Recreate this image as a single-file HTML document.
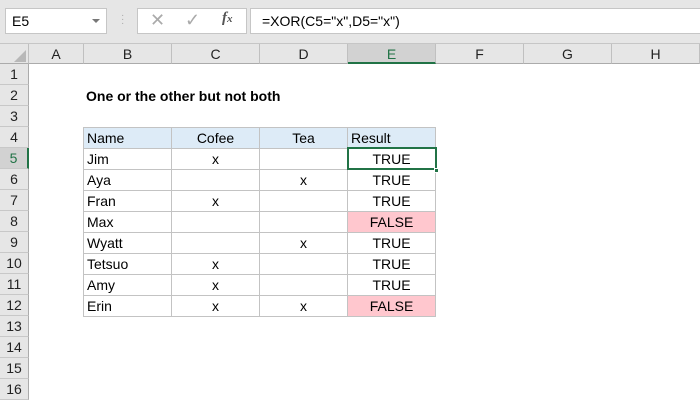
<!DOCTYPE html>
<html><head><style>
*{margin:0;padding:0;box-sizing:border-box}
body{width:700px;height:400px;overflow:hidden;background:#fff;font-family:"Liberation Sans",sans-serif;position:relative;font-size:14px;color:#000}
.a{position:absolute}
.top{left:0;top:0;width:700px;height:44px;background:#e6e6e6;border-bottom:1px solid #c6c6c6}
.box{background:#fff;border:1px solid #c6c6c6}
.ch{top:44px;height:20px;background:#e6e6e6;border-right:1px solid #c0c0c0;border-bottom:1px solid #ababab;text-align:center;line-height:20px;font-size:14px;color:#222}
.rh{left:0;width:29px;height:21px;background:#e6e6e6;border-bottom:1px solid #c8c8c8;border-right:1px solid #ababab;text-align:center;line-height:21px;font-size:14px;color:#222}
.c{height:21px;border-right:1px solid #c3c3c3;border-bottom:1px solid #c3c3c3;line-height:21px;font-size:14px;white-space:nowrap}
.ctr{text-align:center}
.l{padding-left:3px}
.hd{background:#ddebf7}
.f{background:#ffc7ce}
</style></head><body>
<div class="a top"></div>
<div class="a box" style="left:5px;top:8px;width:102px;height:26px;line-height:24px;padding-left:6px;font-size:14px">E5</div>
<div class="a" style="left:92px;top:19px;width:0;height:0;border-left:4px solid transparent;border-right:4px solid transparent;border-top:4px solid #777"></div>
<div class="a" style="left:121px;top:14px;color:#aaa;font-size:10px;line-height:4px">·<br>·<br>·</div>
<div class="a box" style="left:137px;top:8px;width:110px;height:26px"></div>
<div class="a" style="left:150px;top:10px;color:#aaa;font-size:18px">✕</div>
<div class="a" style="left:185px;top:10px;color:#aaa;font-size:18px">✓</div>
<div class="a" style="left:222px;top:10px;color:#555;font-size:15px;font-style:italic;font-family:'Liberation Serif',serif;font-weight:bold">f<span style="font-size:11px">x</span></div>
<div class="a box" style="left:250px;top:8px;width:460px;height:26px;line-height:24px;padding-left:11px;font-size:14px">=XOR(C5="x",D5="x")</div>

<div class="a ch" style="left:0;width:29px"></div>
<div class="a" style="left:14px;top:50px;width:0;height:0;border-left:12px solid transparent;border-bottom:12px solid #b8b8b8"></div>
<div class="a ch" style="left:29px;width:55px">A</div>
<div class="a ch" style="left:84px;width:88px">B</div>
<div class="a ch" style="left:172px;width:88px">C</div>
<div class="a ch" style="left:260px;width:88px">D</div>
<div class="a ch" style="left:348px;width:88px;background:#d2d2d2;border-bottom:2px solid #217346;color:#217346">E</div>
<div class="a ch" style="left:436px;width:88px">F</div>
<div class="a ch" style="left:524px;width:88px">G</div>
<div class="a ch" style="left:612px;width:88px">H</div>

<div class="a rh" style="top:64px">1</div>
<div class="a rh" style="top:85px">2</div>
<div class="a rh" style="top:106px">3</div>
<div class="a rh" style="top:127px">4</div>
<div class="a rh" style="top:148px;background:#d2d2d2;border-right:2px solid #217346;color:#217346">5</div>
<div class="a rh" style="top:169px">6</div>
<div class="a rh" style="top:190px">7</div>
<div class="a rh" style="top:211px">8</div>
<div class="a rh" style="top:232px">9</div>
<div class="a rh" style="top:253px">10</div>
<div class="a rh" style="top:274px">11</div>
<div class="a rh" style="top:295px">12</div>
<div class="a rh" style="top:316px">13</div>
<div class="a rh" style="top:337px">14</div>
<div class="a rh" style="top:358px">15</div>
<div class="a rh" style="top:379px">16</div>

<div class="a" style="left:86px;top:86px;font-weight:bold;font-size:14px;line-height:21px">One or the other but not both</div>

<div class="a" style="left:83px;top:127px;width:353px;height:190px;border-left:1px solid #c3c3c3;border-top:1px solid #c3c3c3"></div>
<div class="a" style="left:84px;top:128px">
<div style="display:flex"><div class="c hd l" style="width:88px">Name</div><div class="c hd ctr" style="width:88px">Cofee</div><div class="c hd ctr" style="width:88px">Tea</div><div class="c hd l" style="width:88px">Result</div></div>
<div style="display:flex"><div class="c l" style="width:88px">Jim</div><div class="c ctr" style="width:88px">x</div><div class="c ctr" style="width:88px"></div><div class="c ctr" style="width:88px">TRUE</div></div>
<div style="display:flex"><div class="c l" style="width:88px">Aya</div><div class="c ctr" style="width:88px"></div><div class="c ctr" style="width:88px">x</div><div class="c ctr" style="width:88px">TRUE</div></div>
<div style="display:flex"><div class="c l" style="width:88px">Fran</div><div class="c ctr" style="width:88px">x</div><div class="c ctr" style="width:88px"></div><div class="c ctr" style="width:88px">TRUE</div></div>
<div style="display:flex"><div class="c l" style="width:88px">Max</div><div class="c ctr" style="width:88px"></div><div class="c ctr" style="width:88px"></div><div class="c ctr f" style="width:88px">FALSE</div></div>
<div style="display:flex"><div class="c l" style="width:88px">Wyatt</div><div class="c ctr" style="width:88px"></div><div class="c ctr" style="width:88px">x</div><div class="c ctr" style="width:88px">TRUE</div></div>
<div style="display:flex"><div class="c l" style="width:88px">Tetsuo</div><div class="c ctr" style="width:88px">x</div><div class="c ctr" style="width:88px"></div><div class="c ctr" style="width:88px">TRUE</div></div>
<div style="display:flex"><div class="c l" style="width:88px">Amy</div><div class="c ctr" style="width:88px">x</div><div class="c ctr" style="width:88px"></div><div class="c ctr" style="width:88px">TRUE</div></div>
<div style="display:flex"><div class="c l" style="width:88px">Erin</div><div class="c ctr" style="width:88px">x</div><div class="c ctr" style="width:88px">x</div><div class="c ctr f" style="width:88px">FALSE</div></div>
</div>
<div class="a" style="left:347px;top:147px;width:90px;height:23px;border:2px solid #217346"></div>
<div class="a" style="left:434px;top:168px;width:5px;height:5px;background:#217346;border:1px solid #fff"></div>
</body></html>
